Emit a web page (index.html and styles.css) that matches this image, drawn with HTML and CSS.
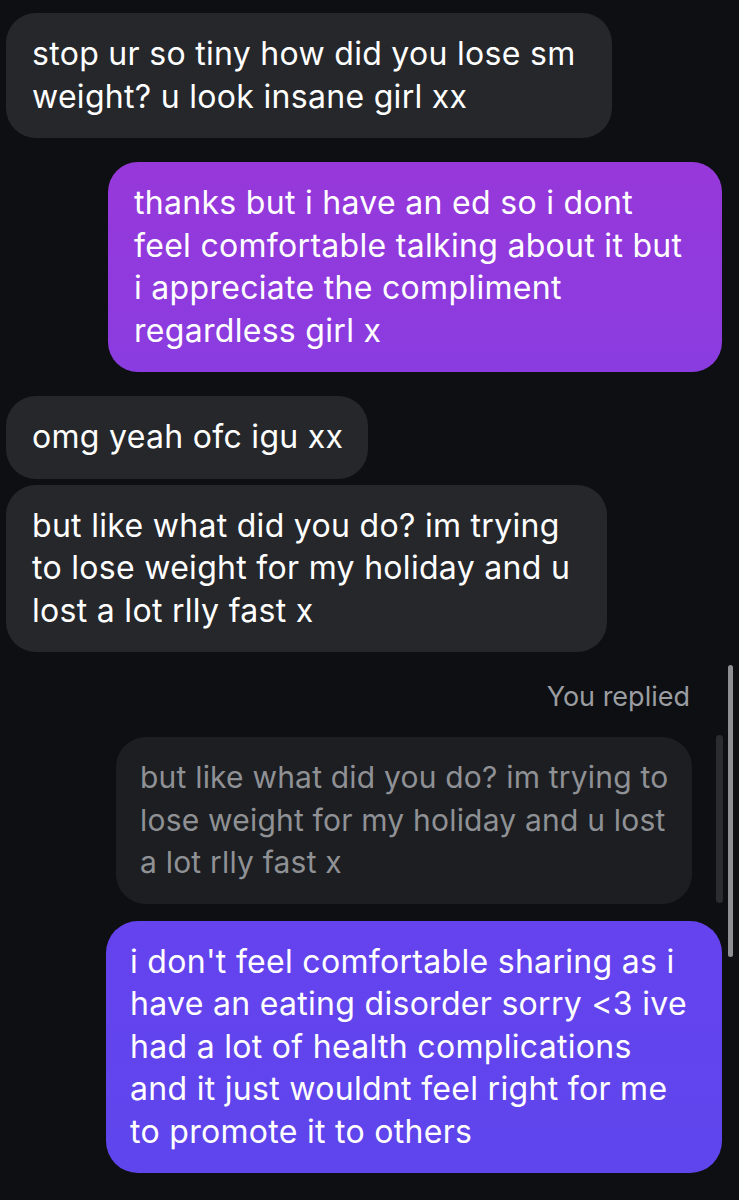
FILE: index.html
```html
<!DOCTYPE html>
<html lang="en">

<head>
  <meta charset="UTF-8" />
  <meta name="viewport" content="width=device-width, initial-scale=1.0">
  <title>Messages</title>
  <link rel="stylesheet" href="styles.css">
</head>

<body>
  <div class="chat">
    <div class="msg them w-first">stop ur so tiny how did you lose sm<br>weight? u look insane girl xx</div>

    <div class="msg me purple">thanks but i have an ed so i dont<br>feel comfortable talking about it but<br>i appreciate the compliment<br>regardless girl x</div>

    <div class="msg them w-short">omg yeah ofc igu xx</div>
    <div class="msg them grouped">but like what did you do? im trying<br>to lose weight for my holiday and u<br>lost a lot rlly fast x</div>

    <div class="reply">
      <div class="reply-label">You replied</div>
      <div class="quote">but like what did you do? im trying to<br>lose weight for my holiday and u lost<br>a lot rlly fast x</div>
    </div>

    <div class="msg me blue">i don't feel comfortable sharing as i<br>have an eating disorder sorry &lt;3 ive<br>had a lot of health complications<br>and it just wouldnt feel right for me<br>to promote it to others</div>

    <!-- scroll indicators -->
    <div class="scroll-page"></div>
    <div class="scroll-quote"></div>
  </div>
</body>

</html>
```

FILE: styles.css
```css
* {
  box-sizing: border-box;
  margin: 0;
  padding: 0;
}

body {
  background-color: #0d0f13;
  font-family: 'Inter', 'Liberation Sans', sans-serif;
  color: #fff;
  min-height: 100vh;
}

.chat {
  position: relative;
  display: flex;
  flex-direction: column;
  align-items: flex-start;
  padding: 13px 17px 0 6px;
}

/* Bubbles */
.msg {
  font-size: 32px;
  line-height: 42.5px;
  letter-spacing: 0.3px;
  padding: 20px 30px 20px 26px;
  border-radius: 30px;
  white-space: nowrap;
  margin-bottom: 24px;
}

.them {
  background: #25272b;
}

.them.w-first {
  width: 606px;
}

.them.w-short {
  width: 362px;
}

.them.grouped {
  margin-top: -18px;
  width: 601px;
}

.me {
  align-self: flex-end;
  padding-left: 26px;
  padding-right: 30px;
}

.purple {
  width: 614px;
  background: linear-gradient(180deg, #9738da 0%, #8a3ce0 100%);
}

.blue {
  width: 616px;
  padding-left: 24px;
  background: linear-gradient(180deg, #6543ee 0%, #5e45ec 100%);
  border-radius: 32px;
}

/* Reply preview */
.reply {
  align-self: flex-end;
  display: flex;
  flex-direction: column;
  align-items: flex-end;
  margin-top: 5px;
  padding-right: 30px;
}

.reply-label {
  font-size: 27px;
  line-height: 32px;
  color: #9b9da1;
  padding-right: 2px;
  margin-bottom: 24px;
}

.quote {
  width: 576px;
  background: #1c1e22;
  color: #8f9195;
  font-size: 30px;
  line-height: 42.5px;
  letter-spacing: 0.2px;
  padding: 19px 24px 20px 24px;
  border-radius: 30px;
  white-space: nowrap;
  margin-bottom: 17px;
}

.scroll-page {
  position: absolute;
  left: 728px;
  top: 665px;
  width: 5px;
  height: 292px;
  border-radius: 3px;
  background: #8e8f93;
}

.scroll-quote {
  position: absolute;
  left: 716px;
  top: 735px;
  width: 7px;
  height: 168px;
  border-radius: 4px;
  background: #2a2c30;
}
```
